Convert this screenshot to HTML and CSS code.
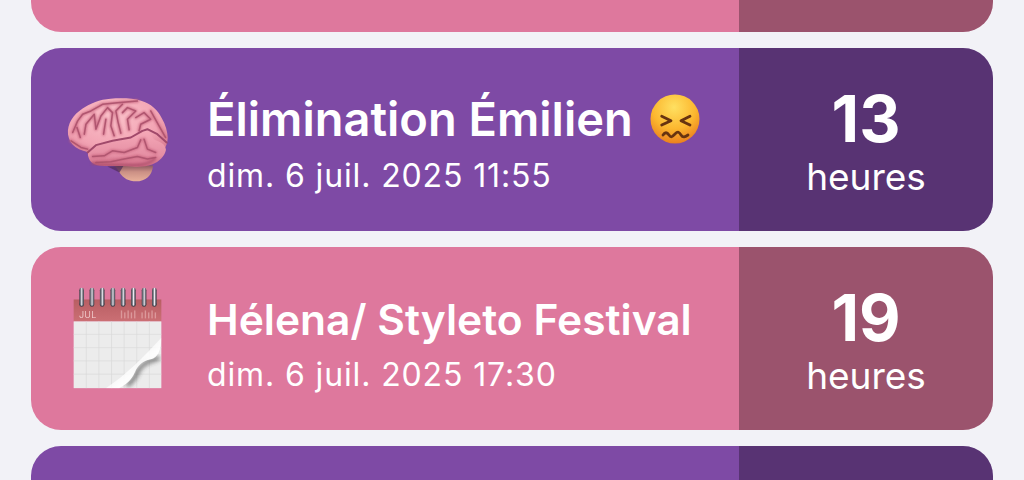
FILE: index.html
```html
<!DOCTYPE html>
<html lang="fr">
<head>
<meta charset="utf-8">
<title>Événements</title>
<link rel="stylesheet" href="styles.css">
</head>
<body>
<main class="list">
  <article class="card pink">
    <div class="main"></div>
    <div class="side"></div>
  </article>

  <article class="card purple">
    <div class="main">
      <div class="icon">
        <svg class="brain" viewBox="70 80 320 265" aria-hidden="true">
          <defs>
            <radialGradient id="bg" cx="45%" cy="28%" r="85%">
              <stop offset="0" stop-color="#fbc2ca"/>
              <stop offset=".55" stop-color="#f2a3b3"/>
              <stop offset="1" stop-color="#c8637d"/>
            </radialGradient>
            <linearGradient id="lobe" x1="0" y1="0" x2="0" y2="1">
              <stop offset="0" stop-color="#f5a9b8"/>
              <stop offset=".7" stop-color="#e58ea3"/>
              <stop offset="1" stop-color="#c9647f"/>
            </linearGradient>
            <linearGradient id="cb" x1="0" y1="0" x2="0" y2="1">
              <stop offset="0" stop-color="#7f4c58"/>
              <stop offset=".45" stop-color="#cb9085"/>
              <stop offset="1" stop-color="#e8b09a"/>
            </linearGradient>
            <filter id="soft"><feGaussianBlur stdDeviation="1.4"/></filter>
            <filter id="soft2"><feGaussianBlur stdDeviation="3"/></filter>
            <g id="sulci">
              <path d="M95 190L110 155 125 135 150 125 185 105 230 100 290 95"/>
              <path d="M130 195L135 165 160 135 165 180 180 140 200 115 215 130 210 170 220 200"/>
              <path d="M245 105L225 125 232 160 240 192"/>
              <path d="M245 130L260 115 285 125 260 150 265 182"/>
              <path d="M285 145L310 130 330 150 300 165 295 185"/>
              <path d="M330 125L355 170 375 205"/>
              <path d="M155 262L190 260 215 245 250 250 290 235 300 212"/>
              <path d="M165 280L210 278 250 270 290 262 320 270 345 265"/>
              <path d="M310 210L320 240 345 250"/>
              <path d="M90 215L120 235 140 240"/>
              <path d="M108 175L118 205"/>
              <path d="M195 150L188 195"/>
            </g>
          </defs>
          <path d="M205 285c16 4 22 10 30 24 12 20 30 28 50 28 30 0 50-18 52-48z" fill="url(#cb)"/>
          <path d="M200 292l36 18 12-20z" fill="#4f2c58" opacity=".7" filter="url(#soft)"/>
          <path d="M81 196c-3-32 16-60 44-78 22-16 52-28 84-30 30-2 66-2 92 6 30 8 50 28 62 52 12 20 18 42 18 60 0 26-14 44-34 58-18 12-44 22-70 20-38-2-68-2-100-4-18-1-32-4-22-30-40-2-70-22-74-54z" fill="url(#bg)"/>
          <path d="M142 262c-6-24 24-38 58-42 36-4 58-8 84-26 14-10 30-14 42-4 8 8 8 18 20 24 12 4 28 10 30 28-4 20-20 36-42 44-18 6-38 8-60 6-36-2-68 0-90-2-24-2-38-10-42-28z" fill="url(#lobe)"/>
          <use href="#sulci" class="sulci-wide" filter="url(#soft2)"/>
          <use href="#sulci" class="sulci-line" filter="url(#soft)"/>
          <path class="main-sulcus" d="M140 250L165 228 215 215 270 205 305 185 320 180 350 195 378 220" filter="url(#soft)"/>
          <path d="M152 282c30 8 90 4 130 6 20 0 44-2 62-20" fill="none" stroke="#a64a66" stroke-width="7" opacity=".7" filter="url(#soft2)"/>
        </svg>
      </div>
      <div class="text">
        <h2 class="title">Élimination Émilien
          <svg class="face" viewBox="0 0 52 52" aria-hidden="true">
            <defs>
              <radialGradient id="fg" cx="48%" cy="26%" r="80%">
                <stop offset="0" stop-color="#ffe061"/>
                <stop offset=".55" stop-color="#fcb72f"/>
                <stop offset=".9" stop-color="#ec8420"/>
                <stop offset="1" stop-color="#d4661a"/>
              </radialGradient>
            </defs>
            <circle cx="26" cy="26" r="24.5" fill="url(#fg)"/>
            <g fill="none" stroke="#673310" stroke-width="2.8" stroke-linecap="round" stroke-linejoin="round">
              <path d="M12.7 23.3l9.3 4.4-9.3 4.3"/>
              <path d="M41 23.3l-9 4.4 9 4.3"/>
              <path d="M14 42c2-3 4-3 6 0s3 2 6-1 4-2 6 1 4 2 7 0"/>
            </g>
          </svg>
        </h2>
        <p class="date">dim. 6 juil. 2025 11:55</p>
      </div>
    </div>
    <div class="side">
      <span class="num">13</span>
      <span class="unit">heures</span>
    </div>
  </article>

  <article class="card pink">
    <div class="main">
      <div class="icon">
        <svg class="cal" viewBox="60 35 280 315" aria-hidden="true">
          <defs>
            <linearGradient id="ring" x1="0" y1="0" x2="1" y2="0">
              <stop offset="0" stop-color="#3c3c46"/>
              <stop offset=".38" stop-color="#9a9ca6"/>
              <stop offset=".52" stop-color="#eeeef4"/>
              <stop offset=".72" stop-color="#84848e"/>
              <stop offset="1" stop-color="#3c3c46"/>
            </linearGradient>
            <linearGradient id="head" x1="0" y1="0" x2="0" y2="1">
              <stop offset="0" stop-color="#b85e63"/>
              <stop offset="1" stop-color="#cb6f74"/>
            </linearGradient>
            <linearGradient id="flap" x1="0" y1="0" x2="1" y2="1">
              <stop offset=".25" stop-color="#ffffff" stop-opacity="0"/>
              <stop offset=".6" stop-color="#ffffff" stop-opacity=".95"/>
              <stop offset="1" stop-color="#ffffff"/>
            </linearGradient>
            <filter id="sh"><feGaussianBlur stdDeviation="7"/></filter>
            <clipPath id="pg"><rect x="68" y="141" width="264" height="201"/></clipPath>
          </defs>
          <rect x="68" y="75" width="264" height="66" fill="url(#head)"/>
          <rect x="68" y="141" width="264" height="201" fill="#ececec"/>
          <g stroke="#dadada" stroke-width="2" fill="none">
            <path d="M68 180h264M68 220h264M68 260h264M68 300h264"/>
            <path d="M106 141v201M144 141v201M182 141v201M220 141v201M258 141v201M296 141v201"/>
          </g>
          <g clip-path="url(#pg)">
            <path d="M225 330c14-10 24-22 30-36 10-22 24-34 48-40 8-2 14-5 19-9" fill="none" stroke="#333" stroke-width="13" opacity=".6" filter="url(#sh)" transform="translate(3 4)"/>
            <path d="M332 190c-1 38-10 60-32 65-25 5-38 17-48 40-10 23-27 37-47 47h-40c60-40 110-90 167-152z" fill="url(#flap)"/>
          </g>
          <text x="84" y="131" class="jul">JUL</text>
          <g fill="#e6adae" opacity=".7">
            <rect x="210" y="108" width="4" height="24"/><rect x="220" y="114" width="4" height="18"/><rect x="230" y="108" width="4" height="24"/><rect x="240" y="114" width="4" height="18"/><rect x="250" y="108" width="4" height="24"/>
            <rect x="272" y="114" width="4" height="18"/><rect x="282" y="108" width="4" height="24"/><rect x="292" y="114" width="4" height="18"/><rect x="302" y="108" width="4" height="24"/><rect x="312" y="114" width="4" height="18"/>
          </g>
          <g class="holes">
            <circle cx="92" cy="90" r="7"/><circle cx="123" cy="90" r="7"/><circle cx="154" cy="90" r="7"/><circle cx="186" cy="90" r="7"/><circle cx="217" cy="90" r="7"/><circle cx="248" cy="90" r="7"/><circle cx="280" cy="90" r="7"/><circle cx="311" cy="90" r="7"/>
          </g>
          <g class="rings">
            <rect x="85" y="40" width="14" height="54" rx="7"/><rect x="116" y="40" width="14" height="54" rx="7"/><rect x="147" y="40" width="14" height="54" rx="7"/><rect x="179" y="40" width="14" height="54" rx="7"/><rect x="210" y="40" width="14" height="54" rx="7"/><rect x="241" y="40" width="14" height="54" rx="7"/><rect x="273" y="40" width="14" height="54" rx="7"/><rect x="304" y="40" width="14" height="54" rx="7"/>
          </g>
        </svg>
      </div>
      <div class="text">
        <h2 class="title title-sm">Hélena/ Styleto Festival</h2>
        <p class="date">dim. 6 juil. 2025 17:30</p>
      </div>
    </div>
    <div class="side">
      <span class="num">19</span>
      <span class="unit">heures</span>
    </div>
  </article>

  <article class="card purple">
    <div class="main"></div>
    <div class="side"></div>
  </article>
</main>
</body>
</html>
```
FILE: styles.css
```css
* { box-sizing: border-box; }
html, body { margin: 0; height: 100%; }
body {
  background: #f2f2f7;
  overflow: hidden;
  font-family: Inter, "Liberation Sans", sans-serif;
  color: #fff;
}
.list {
  display: flex;
  flex-direction: column;
  gap: 16px;
  margin-top: -151px;
  padding: 0 31px;
}
.card {
  display: flex;
  flex: none;
  height: 183px;
  border-radius: 30px;
  overflow: hidden;
}
.pink { background: #de789d; }
.purple { background: #7e4aa5; }
.main {
  flex: 1;
  display: flex;
  align-items: center;
  min-width: 0;
}
.side {
  flex: none;
  width: 254px;
  padding-top: 4px;
  display: flex;
  flex-direction: column;
  align-items: center;
  justify-content: center;
  gap: 1px;
  background: rgba(0, 0, 0, 0.3);
}
.icon {
  flex: none;
  width: 172px;
  margin-right: 4px;
  display: flex;
  justify-content: center;
  align-items: center;
}
.brain { width: 107px; height: 88px; filter: blur(0.3px); }
.cal { width: 93px; height: 105px; filter: blur(0.4px); }
.sulci-wide {
  fill: none;
  stroke: #c9657f;
  stroke-width: 10;
  stroke-linecap: round;
  stroke-linejoin: round;
  opacity: 0.75;
}
.sulci-line {
  fill: none;
  stroke: #b0566f;
  stroke-width: 4.5;
  stroke-linecap: round;
  stroke-linejoin: round;
}
.main-sulcus {
  fill: none;
  stroke: #a0486a;
  stroke-width: 6;
  stroke-linecap: round;
  stroke-linejoin: round;
}
.jul {
  font: 300 27px Inter, "Liberation Sans", sans-serif;
  letter-spacing: 1px;
  fill: #f8dcdc;
}
.holes circle { fill: #3c3c46; }
.rings rect { fill: url(#ring); }
.text {
  min-width: 0;
  padding-top: 8px;
}
.title {
  display: flex;
  align-items: center;
  gap: 16px;
  margin: 0 0 9px;
  font-size: 47px;
  line-height: 56px;
  font-weight: 600;
  white-space: nowrap;
}
.title-sm {
  margin-bottom: 5px;
  font-size: 42.5px;
  line-height: 60px;
}
.face { width: 52px; height: 52px; flex: none; }
.date {
  margin: 0;
  font-size: 32px;
  line-height: 40px;
  font-weight: 400;
  letter-spacing: 0.87px;
  white-space: nowrap;
}
.num {
  font-size: 64px;
  line-height: 70px;
  font-weight: 700;
}
.unit {
  font-size: 37px;
  line-height: 44px;
}
```
